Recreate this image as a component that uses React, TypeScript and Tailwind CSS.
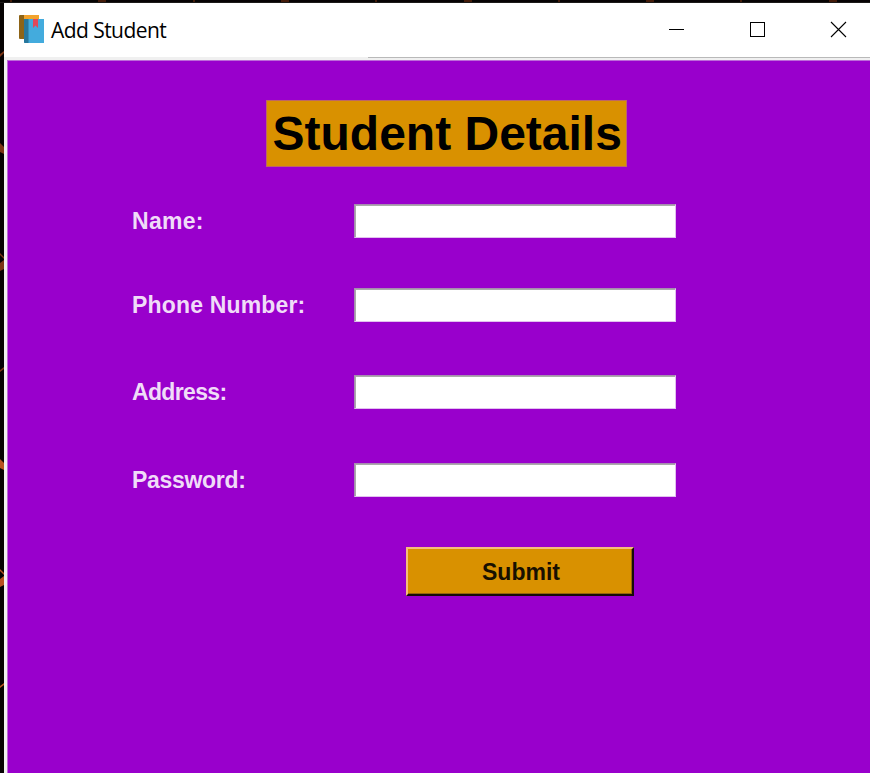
import React from "react";

type Field = { label: string; gap: string; tracking: string };

const fields: Field[] = [
  { label: "Name:", gap: "mt-[37px]", tracking: "tracking-[0.3px]" },
  { label: "Phone Number:", gap: "mt-[50px]", tracking: "tracking-[0.17px]" },
  { label: "Address:", gap: "mt-[53px]", tracking: "tracking-[-0.65px]" },
  { label: "Password:", gap: "mt-[54px]", tracking: "tracking-[-0.3px]" },
];

function BookIcon() {
  return (
    <svg className="-mt-[2px] h-[28px] w-[26px] shrink-0" viewBox="0 0 26 28">
      <path d="M1 0H20V24H1Z" fill="#f2a32c" />
      <path d="M1 0H5V24H1Q0 24 0 23V1Q0 0 1 0Z" fill="#8e6417" />
      <path d="M5 4H25V28H6Q5 28 5 27Z" fill="#43abdd" />
      <path d="M5 4H9.5V28H6Q5 28 5 27Z" fill="#28779c" />
      <path d="M14 4H19V13L16.5 10.5L14 13Z" fill="#e2495a" />
    </svg>
  );
}

function TitleBar() {
  return (
    <header className="flex h-[54px] shrink-0 items-center bg-white">
      <div className="flex flex-1 items-center pl-[15px]">
        <BookIcon />
        <h1 className="ml-[6px] whitespace-nowrap font-['Open_Sans',sans-serif] text-[21px] leading-[28px] tracking-[-0.56px] text-black">
          Add Student
        </h1>
      </div>
      <svg className="h-[54px] w-[201px] shrink-0" viewBox="665 3 201 54" fill="none" stroke="#000" shapeRendering="crispEdges">
        <path d="M665 29.5H680" />
        <rect x="746.5" y="22.5" width="14" height="14" />
        <path d="M827 22L842 37M842 22L827 37" shapeRendering="auto" strokeWidth="1.1" />
      </svg>
    </header>
  );
}

function Backdrop() {
  return (
    <svg className="absolute left-0 top-0 h-[773px] w-[870px]" viewBox="0 0 870 773">
      <path d="M0 0H870V773H0Z" fill="#060303" />
      <path d="M98 0H106V3H98ZM281 0H289V3H281ZM464 0H472V3H464ZM646 0H654V3H646ZM829 0H837V3H829Z" fill="#431b09" />
      <path d="M10 0H12V3H10ZM193 0H195V3H193ZM375 0H377V3H375ZM558 0H560V3H558ZM740 0H742V3H740Z" fill="#431b09" />
      <path d="M0 54L4 51V53L0 57ZM0 143L4 147V154L0 152ZM0 253L4 257V259L0 255ZM0 263L4 260V269L0 271ZM0 370L4 367V369L0 372Z" fill="#7c3515" />
      <path d="M0 459L4 463V470L0 468ZM0 569L4 573V575L0 571ZM0 579L4 576V585L0 587ZM0 686L4 683V685L0 688Z" fill="#b85120" />
      <path d="M0 2H870V3H0Z" fill="#1c1a19" />
    </svg>
  );
}

export default function App() {
  return (
    <div className="relative h-[773px] w-[870px] overflow-hidden font-['Liberation_Sans',Arial,sans-serif]">
      <Backdrop />
      <div className="relative ml-[4px] flex h-[773px] flex-col pt-[3px]">
        <TitleBar />
        <div className="flex h-[3px] shrink-0 bg-[#f0f0f0]">
          <div className="ml-[364px] h-px flex-1 bg-[#b9b9b9]" />
        </div>
        <div className="flex min-h-0 flex-1 border-l-[3px] border-[#f0f0f0]">
          <main className="flex-1 border-l border-t border-[#bd6bd9] bg-[#9900cc]">
            <h2 className="ml-[258px] mt-[39px] h-[67px] w-[361px] whitespace-nowrap border border-[#bd6666] bg-[#d99100] pl-[5.5px] text-[48px] font-bold leading-[65px] text-black">
              Student Details
            </h2>
            <form onSubmit={(e) => e.preventDefault()}>
              {fields.map((f) => (
                <label key={f.label} className={`ml-[124px] flex h-[34px] ${f.gap}`}>
                  <span className={`w-[222px] whitespace-nowrap text-[23px] font-bold leading-[34px] text-[#f0dcf8] ${f.tracking}`}>
                    {f.label}
                  </span>
                  <input
                    type={f.label === "Password:" ? "password" : "text"}
                    className="h-[34px] w-[322px] border border-b-[#e2c0ef] border-l-[#a78bb0] border-r-[#e2c0ef] border-t-[#a78bb0] bg-white shadow-[inset_1px_1px_0_#aaa] outline-none"
                  />
                </label>
              ))}
              <button className="ml-[398px] mt-[50px] block h-[49px] w-[228px] border-2 border-b-[#160c08] border-l-[#f4bd7b] border-r-[#160c08] border-t-[#f4bd7b] bg-[#d99100] pl-[2px] pt-px text-center text-[23px] font-bold leading-[45px] text-[#181000] shadow-[inset_-1px_-1px_0_#94640a]">
                Submit
              </button>
            </form>
          </main>
        </div>
      </div>
    </div>
  );
}
